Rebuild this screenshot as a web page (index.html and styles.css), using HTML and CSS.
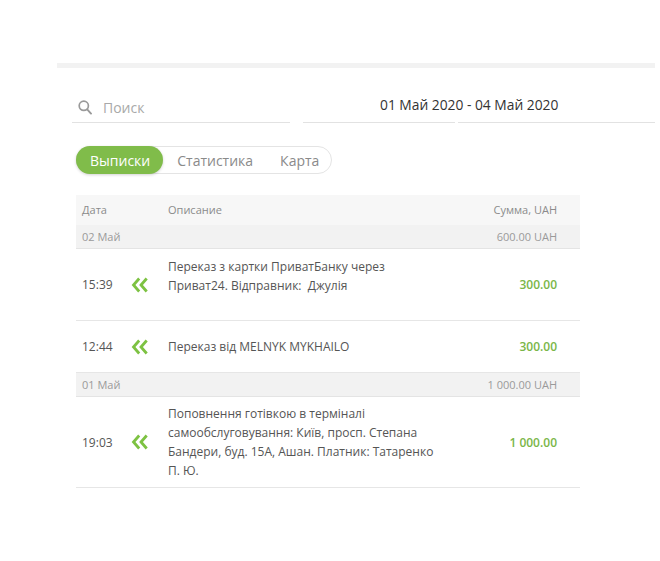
FILE: index.html
```html
<!DOCTYPE html>
<html lang="uk">
<head>
<meta charset="utf-8">
<title>Выписки</title>
<link rel="stylesheet" href="styles.css">
</head>
<body>
<div class="topbar"></div>
<div class="content">
  <div class="filters">
    <div class="search">
      <svg class="search-icon" width="14" height="15" viewBox="0 0 14 15"><circle cx="5.8" cy="5.8" r="4.6" fill="none" stroke="#9a9a9a" stroke-width="1.7"/><line x1="9.2" y1="9.4" x2="13" y2="13.6" stroke="#9a9a9a" stroke-width="1.9" stroke-linecap="round"/></svg>
      <span class="placeholder">Поиск</span>
    </div>
    <div class="dates">
      <div class="date-text">01 Май 2020 - 04 Май 2020</div>
      <div class="date-lines">
        <span class="line line-a"></span>
        <span class="line line-b"></span>
      </div>
    </div>
  </div>

  <div class="tabs">
    <span class="tab tab-active">Выписки</span>
    <span class="tab">Статистика</span>
    <span class="tab">Карта</span>
  </div>

  <div class="table">
    <div class="row head">
      <span class="c-date">Дата</span>
      <span class="c-icon"></span>
      <span class="c-desc">Описание</span>
      <span class="c-sum">Сумма, UAH</span>
    </div>
    <div class="row group">
      <span class="c-date">02 Май</span>
      <span class="c-sum">600.00 UAH</span>
    </div>
    <div class="row item item-2">
      <span class="c-date">15:39</span>
      <span class="c-icon"><svg width="18" height="16" viewBox="0 0 18 16"><polyline points="8.2,1.5 2.5,8 8.2,14.5" fill="none" stroke="#7dc242" stroke-width="2.8"/><polyline points="15.7,1.5 10,8 15.7,14.5" fill="none" stroke="#7dc242" stroke-width="2.8"/></svg></span>
      <span class="c-desc c-top">Переказ з картки ПриватБанку через Приват24. Відправник:&nbsp; Джулія</span>
      <span class="c-sum amount">300.00</span>
    </div>
    <div class="row item item-1">
      <span class="c-date">12:44</span>
      <span class="c-icon"><svg width="18" height="16" viewBox="0 0 18 16"><polyline points="8.2,1.5 2.5,8 8.2,14.5" fill="none" stroke="#7dc242" stroke-width="2.8"/><polyline points="15.7,1.5 10,8 15.7,14.5" fill="none" stroke="#7dc242" stroke-width="2.8"/></svg></span>
      <span class="c-desc">Переказ від MELNYK MYKHAILO</span>
      <span class="c-sum amount">300.00</span>
    </div>
    <div class="row group">
      <span class="c-date">01 Май</span>
      <span class="c-sum">1 000.00 UAH</span>
    </div>
    <div class="row item item-4">
      <span class="c-date">19:03</span>
      <span class="c-icon"><svg width="18" height="16" viewBox="0 0 18 16"><polyline points="8.2,1.5 2.5,8 8.2,14.5" fill="none" stroke="#7dc242" stroke-width="2.8"/><polyline points="15.7,1.5 10,8 15.7,14.5" fill="none" stroke="#7dc242" stroke-width="2.8"/></svg></span>
      <span class="c-desc">Поповнення готівкою в терміналі самообслуговування: Київ, просп. Степана Бандери, буд. 15А, Ашан. Платник: Татаренко П. Ю.</span>
      <span class="c-sum amount">1 000.00</span>
    </div>
  </div>
</div>
</body>
</html>
```

FILE: styles.css
```css
* { box-sizing: border-box; }
html, body { margin: 0; padding: 0; background: #fff; }
body {
  font-family: "Open Sans", "Noto Sans", sans-serif;
  color: #555;
}

.topbar {
  margin: 63px 5px 0 57px;
  height: 5px;
  background: #f2f2f2;
}

.content {
  padding-left: 72px;
}

.filters {
  display: flex;
  margin-top: 22px;
  height: 33px;
}

.search {
  width: 218px;
  border-bottom: 1px solid #e2e2e2;
  display: flex;
  align-items: center;
  padding-left: 6px;
  padding-top: 2px;
}
.search-icon { margin-right: 11px; }
.placeholder {
  font-size: 14px;
  color: #a9a9a9;
}

.dates {
  margin-left: 13px;
  display: flex;
  flex-direction: column;
  width: 352px;
}
.date-text {
  flex: 1;
  display: flex;
  align-items: center;
  padding-left: 77px;
  font-size: 13.8px;
  color: #333;
  padding-bottom: 4px;
}
.date-lines {
  display: flex;
  gap: 3px;
  height: 1px;
}
.line { display: block; height: 1px; background: #e2e2e2; }
.line-a { width: 152px; }
.line-b { flex: 1; }

.tabs {
  display: inline-flex;
  margin: 23px 0 0 4px;
  height: 28px;
  border: 1px solid #e4e4e4;
  border-radius: 14px;
  align-items: stretch;
}
.tab {
  display: flex;
  align-items: center;
  padding: 0 13px 0 14px;
  font-size: 14px;
  color: #8a8a8a;
  border-radius: 14px;
}
.tab:last-child { padding-right: 12px; }
.tab-active {
  margin: -1px 0 -1px -1px;
  padding: 0 13px 0 14px;
  background: #80bc4a;
  color: #fff;
  box-shadow: 0 1px 3px rgba(0,0,0,0.18);
}

.table {
  margin: 21px 0 0 4px;
  width: 504px;
}

.row {
  display: flex;
  align-items: center;
  padding: 0 23px 0 6px;
}
.c-date { width: 49px; flex: none; }
.c-icon { width: 37px; flex: none; display: flex; align-items: center; }
.c-desc { width: 268px; flex: none; }
.c-sum { flex: 1; text-align: right; }

.head {
  height: 30px;
  background: #f7f7f7;
  font-size: 11px;
  color: #8b8b8b;
  padding-bottom: 2px;
}
.group {
  height: 24px;
  background: #f2f2f2;
  font-size: 11px;
  color: #9a9a9a;
  border-bottom: 1px solid #e4e4e4;
}
.item {
  font-size: 12px;
  line-height: 19px;
  color: #555;
  border-bottom: 1px solid #e6e6e6;
}
.item-2 { height: 72px; }
.c-top { align-self: flex-start; padding-top: 9px; line-height: 18.5px; }
.item-1 { padding-top: 16px; padding-bottom: 16px; }
.item-4 { padding-top: 7px; padding-bottom: 7px; }
.amount {
  color: #7ab648;
  font-weight: 600;
}
```
